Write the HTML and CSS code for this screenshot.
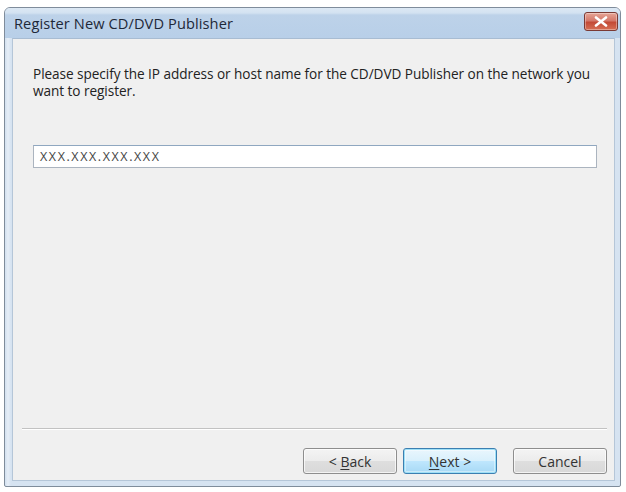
FILE: index.html
```html
<!DOCTYPE html>
<html>
<head>
<meta charset="utf-8">
<link rel="stylesheet" href="styles.css">
</head>
<body>
<div class="window">
  <div class="titlebar">
    <span class="title">Register New CD/DVD Publisher</span>
    <span class="close">
      <svg width="14" height="11" viewBox="0 0 14 11"><path d="M2 1.5 L12 9.5 M12 1.5 L2 9.5" stroke="#ffffff" stroke-width="2.6" stroke-linecap="round"/></svg>
    </span>
  </div>
  <div class="client">
    <p class="prompt">Please specify the IP address or host name for the CD/DVD Publisher on the network you want to register.</p>
    <div class="input">XXX.XXX.XXX.XXX</div>
    <div class="spacer"></div>
    <div class="separator"></div>
    <div class="buttons">
      <button class="btn">&lt; <u>B</u>ack</button>
      <button class="btn default"><u>N</u>ext &gt;</button>
      <button class="btn cancel">Cancel</button>
    </div>
  </div>
</div>
</body>
</html>
```

FILE: styles.css
```css
html, body {
  margin: 0;
  padding: 0;
  background: #ffffff;
}
body {
  font-family: "Open Sans", "Noto Sans", sans-serif;
  color: #222222;
}
.window {
  margin: 7px 0 0 4px;
  width: 615px;
  height: 478px;
  border: 1px solid #7f8c9b;
  border-radius: 6px 6px 2px 2px;
  background: linear-gradient(to right, #d2e0ef 0px, #e6eef7 3px, #d6e3f1 6px, #d6e3f1 100%);
  display: flex;
  flex-direction: column;
  box-sizing: content-box;
}
.titlebar {
  height: 30px;
  display: flex;
  align-items: center;
  justify-content: space-between;
  padding: 0 2px 0 9px;
  background: linear-gradient(to bottom, #dce8f4 0px, #d3e2f1 5px, #bdd2e9 7px, #b8cfe8 100%);
  border-radius: 5px 5px 0 0;
}
.title {
  font-size: 14.6px;
  color: #1e2838;
  letter-spacing: 0.1px;
  padding-bottom: 1px;
}
.close {
  width: 32px;
  height: 17px;
  margin-top: -3px;
  border: 1px solid #7a3a34;
  border-radius: 3px;
  background: linear-gradient(to bottom, #e6a596 0%, #d4786a 45%, #c34a36 55%, #d66f55 100%);
  display: flex;
  align-items: center;
  justify-content: center;
  box-shadow: inset 0 0 0 1px rgba(255,255,255,0.35);
}
.client {
  flex: 1;
  margin: 0 5px 5px 7px;
  background: #f0f0f0;
  border: 1px solid #b5c6d8;
  border-top-color: #a8bcd2;
  display: flex;
  flex-direction: column;
}
.prompt {
  margin: 26px 18px 0 20px;
  font-size: 13.6px;
  line-height: 17px;
  color: #222222;
  letter-spacing: -0.05px;
}
.input {
  margin: 46px 17px 0 20px;
  height: 21px;
  border: 1px solid #abb4bf;
  border-top-color: #8fa7c0;
  background: #ffffff;
  font-size: 12.5px;
  line-height: 21px;
  padding-left: 6px;
  color: #444444;
  letter-spacing: 1.6px;
}
.spacer {
  flex: 1;
}
.separator {
  margin: 0 7px 0 9px;
  height: 0;
  border-top: 1px solid #c2c2c2;
  border-bottom: 1px solid #ffffff;
}
.buttons {
  display: flex;
  justify-content: flex-end;
  padding: 18px 7px 6px 0;
  gap: 6px;
}
.btn {
  width: 94px;
  height: 26px;
  font-family: "Open Sans", "Noto Sans", sans-serif;
  font-size: 14px;
  color: #333333;
  border: 1px solid #8e8e8e;
  border-radius: 3px;
  background: linear-gradient(to bottom, #f4f4f4 0%, #ececec 48%, #dedede 52%, #d8d8d8 100%);
  box-shadow: inset 0 0 0 1px rgba(255,255,255,0.7);
  padding: 0;
}
.btn u {
  text-decoration-thickness: 1px;
  text-underline-offset: 2px;
}
.btn.default {
  border-color: #3c7fb1;
  box-shadow: inset 0 0 0 1px #9ee0f7, inset 0 0 0 2px rgba(255,255,255,0.4);
  background: linear-gradient(to bottom, #eaf6fd 0%, #d9f0fc 48%, #bee6fd 52%, #a7d9f5 100%);
}
.btn.cancel {
  margin-left: 10px;
}
```
